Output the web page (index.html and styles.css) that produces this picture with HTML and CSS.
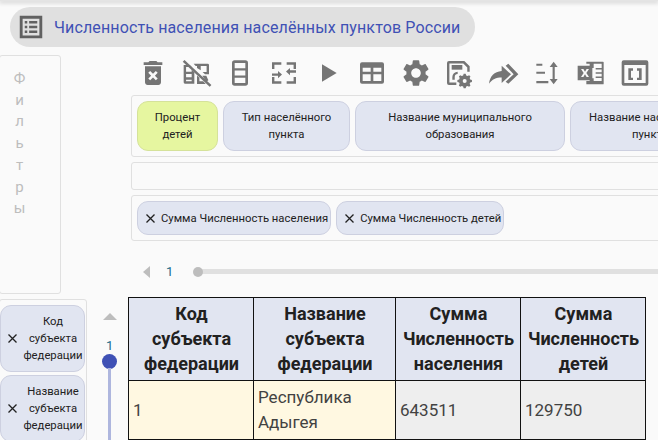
FILE: index.html
```html
<!DOCTYPE html>
<html lang="ru">
<head>
<meta charset="utf-8">
<title>Численность населения</title>
<link rel="stylesheet" href="styles.css">
</head>
<body>
<div class="topbar"></div>
<header class="title">
  <svg class="title-icon" viewBox="0 0 24 24"><path d="M3 3h18v18H3z M5.300 5.300v13.400h13.400V5.300z" fill-rule="evenodd"/><path d="M7 7.200h2v2H7zM10.500 7.200H17v2h-6.500zM7 11h2v2H7zM10.500 11H17v2h-6.500zM7 14.800h2v2H7zM10.500 14.800H17v2h-6.500z"/></svg>
  <span class="title-text">Численность населения населённых пунктов России</span>
</header>
<main class="main">
  <aside class="left">
    <div class="filters">
      <span>Ф</span><span>и</span><span>л</span><span>ь</span><span>т</span><span>р</span><span>ы</span>
    </div>
    <div class="row-fields">
      <div class="chip vchip"><svg class="x" viewBox="0 0 9 9"><path d="M.5.500l8 8M8.500.500l-8 8"/></svg><span class="vtext">Код субъекта федерации</span></div>
      <div class="chip vchip"><svg class="x" viewBox="0 0 9 9"><path d="M.5.500l8 8M8.500.500l-8 8"/></svg><span class="vtext">Название субъекта федерации</span></div>
    </div>
  </aside>
  <section class="right">
    <nav class="toolbar">
      <div class="tool"><svg viewBox="0 0 24 24"><path d="M6 19c0 1.100.9 2 2 2h8c1.100 0 2-.9 2-2V7H6v12zm2.460-7.120 1.410-1.410L12 12.590l2.120-2.120 1.410 1.410L13.410 14l2.120 2.120-1.410 1.410L12 15.410l-2.120 2.120-1.410-1.410L10.590 14l-2.130-2.120zM15.500 4l-1-1h-5l-1 1H5v2h14V4z"/></svg></div>
      <div class="tool"><svg viewBox="0 0 24 24"><path d="M2 6h4.500l1.500 1.500H3.800V11H8V9.500l2 2V20H3a1 1 0 0 1-1-1zM3.800 12.800v2.400H8v-2.400zM3.800 17v1.200H8V17z" fill-rule="evenodd"/><path d="M9.500 5H20a1 1 0 0 1 1 1v7h-3l-1.800-1.800h3V6.800h-4.400V10L12 8.200V6.800h-1z"/><path d="M2.600 2.200 22.800 21l-1.300 1.300L1.300 3.500z"/><path d="M12 13.800l1.800 1.800v2.600h2.800l2 2H12z"/><path d="M16 14h3l1.500 3.500-1.500 1z"/></svg></div>
      <div class="tool"><svg viewBox="0 0 24 24"><path d="M8 2.500h8a2 2 0 0 1 2 2v15a2 2 0 0 1-2 2H8a2 2 0 0 1-2-2v-15a2 2 0 0 1 2-2zM8 4.500v4h8v-4zM8 10.200v3.600h8v-3.600zM8 15.500v4h8v-4z" fill-rule="evenodd"/></svg></div>
      <div class="tool"><svg viewBox="0 0 24 24"><path d="M3 4h7v1.800H4.800V9H3zM14 4h7v5h-1.800V5.800H14zM3 15h1.800v3.200H10V20H3zM19.200 15H21v5h-7v-1.800h5.200z"/><path d="M3 12.300h4.500V10.500l3 2.700-3 2.700v-1.800H3zM21 10h-4.500V8.200l-3 2.700 3 2.700v-1.800H21z"/></svg></div>
      <div class="tool"><svg viewBox="0 0 24 24"><path d="M7.500 5.500v13l11-6.500z"/></svg></div>
      <div class="tool"><svg viewBox="0 0 24 24"><path d="M4.500 4h15A1.500 1.500 0 0 1 21 5.500v13a1.500 1.500 0 0 1-1.500 1.500h-15A1.500 1.500 0 0 1 3 18.500v-13A1.500 1.500 0 0 1 4.500 4zM5 8v3h6V8zM13 8v3h6V8zM5 13v5h6v-5zM13 13v5h6v-5z" fill-rule="evenodd"/></svg></div>
      <div class="tool"><svg viewBox="0 0 24 24"><path d="M19.140 12.940c.04-.3.06-.61.06-.94 0-.32-.02-.64-.07-.94l2.030-1.580c.18-.14.23-.41.12-.61l-1.920-3.320c-.12-.22-.37-.29-.59-.22l-2.390.96c-.5-.38-1.030-.7-1.620-.94l-.36-2.540c-.04-.24-.24-.41-.48-.41h-3.840c-.24 0-.43.17-.47.41l-.36 2.540c-.59.24-1.130.57-1.620.94l-2.390-.96c-.22-.08-.47 0-.59.22L2.740 8.870c-.12.21-.08.47.12.61l2.030 1.580c-.05.3-.09.63-.09.94s.02.64.07.94l-2.030 1.580c-.18.14-.23.41-.12.61l1.920 3.320c.12.22.37.29.59.22l2.390-.96c.5.38 1.030.7 1.620.94l.36 2.540c.05.24.24.41.48.41h3.840c.24 0 .44-.17.47-.41l.36-2.540c.59-.24 1.130-.56 1.620-.94l2.390.96c.22.08.47 0 .59-.22l1.920-3.320c.12-.22.07-.47-.12-.61l-2.010-1.580zM12 15.600c-1.980 0-3.600-1.620-3.600-3.600s1.620-3.600 3.600-3.600 3.600 1.620 3.600 3.600-1.620 3.600-3.600 3.600z"/></svg></div>
      <div class="tool"><svg viewBox="0 0 24 24"><path d="M4.500 3H16l4 4v4h-1.800V7.800L15.200 4.800H4.800v14.400H10V21H4.500A1.500 1.500 0 0 1 3 19.500v-15A1.500 1.500 0 0 1 4.500 3z"/><path d="M6.500 6h8v3.500h-8z"/><path d="M7 15a4 4 0 0 1 4-4v1.800A2.200 2.200 0 0 0 8.800 15v2H7z"/><path d="M17 12.500l.4 1.300 1 .4 1.200-.6 1 1-.6 1.200.4 1 1.300.4v1.500l-1.300.4-.4 1 .6 1.200-1 1-1.200-.6-1 .4-.4 1.300h-1.500l-.4-1.300-1-.4-1.200.6-1-1 .6-1.200-.4-1-1.300-.4v-1.500l1.300-.4.4-1-.6-1.200 1-1 1.200.6 1-.4.4-1.300zM16.250 16.500a1.500 1.500 0 1 0 0 3 1.500 1.500 0 0 0 0-3z" fill-rule="evenodd"/></svg></div>
      <div class="tool"><svg viewBox="0 0 24 24"><path d="M1.500 20c.6-5.500 4-9 9.500-9.500V6.500l7 6.500-7 6.500v-4.200c-4.200 0-7.200 1.300-9.500 4.700z"/><path d="M14 6.500 16 5l7.500 8-7.500 7-2-1.500 6-5.500z"/></svg></div>
      <div class="tool"><svg viewBox="0 0 24 24"><path d="M4 5h4.500v1.600H4zM4 11h6.500v1.600H4zM4 18h9v1.600H4z"/><path d="M16.200 7.500h-2.200L17 3.500l3 4h-2.200v9h2.200l-3 4-3-4h2.200z"/></svg></div>
      <div class="tool"><svg viewBox="0 0 24 24"><path d="M8.500 3.500H21a.5.500 0 0 1 .5.500v16a.5.500 0 0 1-.5.500H8.500V18H20v-2.200h-4.500v-1.200H20v-2h-4.500v-1.200H20v-2h-4.500V8.200H20V5H8.500zM11 5v3.200h3V5zM11 16v2h3v-2z" fill-rule="evenodd"/><path d="M2 6.500h11v11H2zM4.500 9l2 3-2 3h1.800l1.200-2 1.200 2h1.800l-2-3 2-3H8.700l-1.200 2-1.200-2z" fill-rule="evenodd"/></svg></div>
      <div class="tool"><svg viewBox="0 0 24 24"><path d="M3.500 2.500h17A1.500 1.500 0 0 1 22 4v16a1.500 1.500 0 0 1-1.500 1.500h-17A1.500 1.500 0 0 1 2 20V4a1.500 1.500 0 0 1 1.500-1.500zM4 6v13.500h16V6z" fill-rule="evenodd"/><path d="M7 8.500h3.500v1.800H9v5.200h1.500v1.800H7zM17 8.500h-3.500v1.800H15v5.200h-1.500v1.800H17z"/></svg></div>
    </nav>
    <div class="panel">
      <div class="chip tall lime w81">Процент детей</div>
      <div class="chip tall w127">Тип населённого пункта</div>
      <div class="chip tall w210">Название муниципального образования</div>
      <div class="chip tall w160">Название населённого пункта</div>
    </div>
    <div class="panel empty"></div>
    <div class="panel">
      <div class="chip short"><svg class="x" viewBox="0 0 9 9"><path d="M.5.500l8 8M8.500.500l-8 8"/></svg>Сумма Численность населения</div>
      <div class="chip short"><svg class="x" viewBox="0 0 9 9"><path d="M.5.500l8 8M8.500.500l-8 8"/></svg>Сумма Численность детей</div>
    </div>
    <div class="hslider">
      <span class="tri-left"></span>
      <span class="hval">1</span>
      <span class="htrack"><span class="hthumb"></span></span>
    </div>
    <div class="content">
      <div class="vslider">
        <span class="tri-up"></span>
        <span class="vval">1</span>
        <span class="vthumb"></span>
        <span class="vtrack"></span>
      </div>
      <table class="pivot">
        <thead>
          <tr>
            <th class="c1">Код субъекта федерации</th>
            <th class="c2">Название субъекта федерации</th>
            <th class="c3">Сумма Численность населения</th>
            <th class="c4">Сумма Численность детей</th>
          </tr>
        </thead>
        <tbody>
          <tr>
            <td class="dim">1</td>
            <td class="dim">Республика Адыгея</td>
            <td class="val">643511</td>
            <td class="val">129750</td>
          </tr>
        </tbody>
      </table>
    </div>
  </section>
</main>
</body>
</html>
```
FILE: styles.css
```css
* { box-sizing: border-box; }
html, body { margin: 0; height: 440px; overflow: hidden; }
body { background: #fafafa; font-family: Roboto, "Liberation Sans", sans-serif; color: #212121; }

.topbar { height: 1px; background: #e4e4e4; box-shadow: 0 1px 4px 1px rgba(0,0,0,.18); }

.title { display: flex; align-items: center; width: 465px; height: 40px; margin: 6px 0 0 10px; padding-left: 6px; background: #e0e0e0; border-radius: 20px; }
.title-icon { width: 30px; height: 30px; fill: #616161; flex: none; }
.title-text { margin-left: 8px; font-size: 16px; letter-spacing: .13px; color: #3f51b5; white-space: nowrap; }

.main { display: flex; margin-top: 8px; }
.left { width: 131px; flex: none; display: flex; flex-direction: column; }

.filters { width: 62px; height: 239px; margin-left: -1px; padding: 12px 21px 0 0; border: 1px solid #e0e0e0; border-radius: 3px; display: flex; flex-direction: column; align-items: center; color: #bdbdbd; font-size: 15px; line-height: 21.700px; }
.row-fields { width: 88px; margin: 5px 0 0 -1px; padding: 5px 1px 0 0; height: 200px; border: 1px solid #e0e0e0; border-radius: 3px; display: flex; flex-direction: column; gap: 3px; }

.chip { display: flex; align-items: center; justify-content: center; flex: none; background: #e1e5f1; border: 1px solid #cdd0e0; border-radius: 11px; font-size: 11.300px; line-height: 17px; color: #212121; text-align: center; }
.vchip { width: 85px; height: 67px; padding: 0 1px 0 7px; }
.vtext { flex: 1; }
.x { width: 9px; height: 9px; flex: none; margin-right: 6px; fill: none; stroke: #212121; stroke-width: 1.300; }

.right { flex: 1; min-width: 0; }
.toolbar { display: flex; height: 36px; margin-bottom: 4px; }
.tool { width: 43.800px; display: flex; align-items: center; justify-content: center; flex: none; }
.tool svg { width: 32px; height: 32px; fill: #757575; flex: none; }

.panel { display: flex; gap: 5px; width: 560px; padding: 5px; border: 1px solid #e0e0e0; border-radius: 3px; margin-bottom: 5px; overflow: hidden; }
.empty { height: 28px; }
.tall { height: 50px; padding: 0 12px; }
.lime { background: #e6f6a0; border-color: #d5e29a; }
.w81 { width: 81px; }
.w127 { width: 127px; }
.w210 { width: 210px; }
.w160 { width: 160px; }
.short { height: 34px; padding: 0 2px 0 8px; white-space: nowrap; }

.hslider { display: flex; align-items: center; height: 51px; padding-left: 12px; }
.tri-left { width: 0; height: 0; border: 6.500px solid transparent; border-left-width: 0; border-right: 7px solid #bdbdbd; }
.hval { margin-left: 16px; width: 14px; font-size: 13px; color: #1a6a8c; }
.htrack { position: relative; flex: 1; height: 5px; margin-left: 18px; background: #e0e0e0; }
.hthumb { position: absolute; left: -5px; top: -2.500px; width: 10px; height: 10px; border-radius: 50%; background: #bdbdbd; }

.content { display: flex; margin: 0 0 0 -3px; }
.vslider { width: 0; position: relative; }
.vslider > * { position: absolute; }
.tri-up { left: -25px; top: 16px; width: 0; height: 0; border: 7px solid transparent; border-top-width: 0; border-bottom: 7px solid #bdbdbd; }
.vval { left: -22px; top: 41px; font-size: 13px; color: #1a6a8c; }
.vthumb { left: -26px; top: 57px; width: 15px; height: 15px; border-radius: 50%; background: #3f51b5; }
.vtrack { left: -20px; top: 71px; width: 3px; height: 80px; background: #aeb6de; }

.pivot { border-collapse: collapse; table-layout: fixed; width: 518px; font-size: 18px; line-height: 25px; }
.pivot th, .pivot td { border: 1px solid #111; padding: 3px 4px 4px 5px; }
.pivot th { background: #e1e5f1; font-weight: 700; text-align: center; height: 82px; }
.pivot td { height: 59px; padding: 4px 4px 4px 4px; font-size: 17px; font-weight: 400; text-align: left; color: #424242; }
.c1 { width: 125px; }
.c2 { width: 142px; }
.c3 { width: 125px; }
.c4 { width: 125px; }
.dim { background: #fff8e1; }
.val { background: #eeeeee; }
```
